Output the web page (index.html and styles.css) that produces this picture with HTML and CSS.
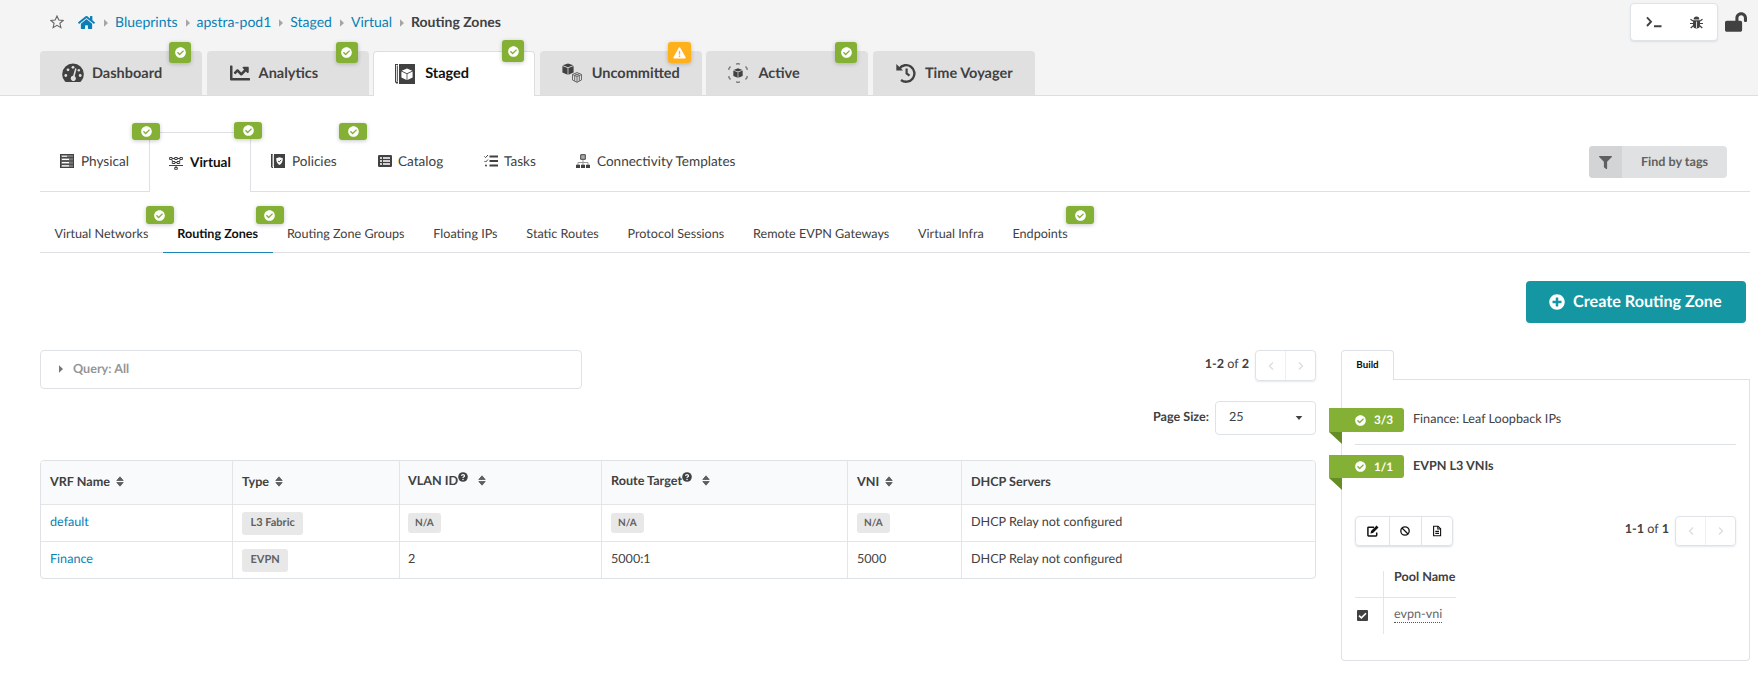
FILE: index.html
```html
<!DOCTYPE html>
<html lang="en">
<head>
<meta charset="utf-8">
<title>Routing Zones</title>
<link rel="stylesheet" href="styles.css">
</head>
<body>
<svg class="defs" aria-hidden="true">
  <symbol id="check" viewBox="0 0 512 512"><path d="M504 256c0 136.967-111.033 248-248 248S8 392.967 8 256 119.033 8 256 8s248 111.033 248 248zM227.314 387.314l184-184c6.248-6.248 6.248-16.379 0-22.627l-22.627-22.627c-6.248-6.249-16.379-6.249-22.628 0L216 308.118l-70.059-70.059c-6.248-6.248-16.379-6.248-22.628 0l-22.627 22.627c-6.248 6.248-6.248 16.379 0 22.627l104 104c6.249 6.249 16.379 6.249 22.628.001z"/></symbol>
  <symbol id="caret" viewBox="0 0 4 8"><path d="M0 0.300L4 4L0 7.700z"/></symbol>
  <symbol id="sort" viewBox="0 0 8 11"><path d="M.8 4.500L4 .8L7.200 4.500zM.8 6.500H7.200L4 10.200z" stroke="currentColor" stroke-width=".9" stroke-linejoin="round"/></symbol>
  <symbol id="help" viewBox="0 0 10 10"><circle cx="5" cy="5" r="4.800"/><path d="M3.500 3.900C3.600 2.200 6.500 2.200 6.500 3.900C6.500 4.900 5 4.800 5 6" fill="none" stroke="#f9fafc" stroke-width="1.200"/><circle cx="5" cy="7.500" r=".75" fill="#f9fafc"/></symbol>
  <symbol id="prev" viewBox="0 0 6 10"><path d="M5 1.500L1.500 5L5 8.500" fill="none" stroke="currentColor" stroke-width="1.300"/></symbol>
  <symbol id="next" viewBox="0 0 6 10"><path d="M1 1.500L4.500 5L1 8.500" fill="none" stroke="currentColor" stroke-width="1.300"/></symbol>
  <symbol id="cube" viewBox="0 0 12 12"><path d="M6 .4L11.300 2.300L6 4.300L.7 2.300zM.4 3L5.600 5V11.800L.4 9.600zM11.600 3L6.400 5V11.800L11.600 9.600z"/></symbol>
</svg>

<header class="top">
  <div class="crumb-row">
    <nav class="crumbs">
      <svg class="star" viewBox="0 0 14 14"><path d="M7 1L8.800 5L13.200 5.400L9.900 8.300L10.900 12.700L7 10.400L3.100 12.700L4.100 8.300L.8 5.400L5.200 5z"/></svg>
      <svg class="home" viewBox="0 0 576 512"><path d="M280.370 148.260L96 300.110V464a16 16 0 0 0 16 16l112.060-.29a16 16 0 0 0 15.920-16V368a16 16 0 0 1 16-16h64a16 16 0 0 1 16 16v95.640a16 16 0 0 0 16 16.050L464 480a16 16 0 0 0 16-16V300L295.670 148.260a12.190 12.190 0 0 0-15.300 0zM571.600 251.470L488 182.560V44.050a12 12 0 0 0-12-12h-56a12 12 0 0 0-12 12v72.610L318.470 43a48 48 0 0 0-61 0L4.340 251.470a12 12 0 0 0-1.600 16.900l25.500 31A12 12 0 0 0 45.150 301l235.220-193.740a12.190 12.190 0 0 1 15.300 0L530.900 301a12 12 0 0 0 16.900-1.600l25.500-31a12 12 0 0 0-1.700-16.930z"/></svg>
      <svg class="sep"><use href="#caret"/></svg>
      <a>Blueprints</a><svg class="sep"><use href="#caret"/></svg>
      <a>apstra-pod1</a><svg class="sep"><use href="#caret"/></svg>
      <a>Staged</a><svg class="sep"><use href="#caret"/></svg>
      <a>Virtual</a><svg class="sep"><use href="#caret"/></svg>
      <b>Routing Zones</b>
    </nav>
    <div class="tools">
      <div class="tool-box">
        <svg class="term" viewBox="0 0 16 12"><path d="M1 1.300L5 5.700L1 10M8 10.200H15.500" fill="none" stroke="#414141" stroke-width="1.900"/></svg>
        <svg class="bug" viewBox="0 0 13 13"><path d="M3.700 3.400a2.800 2.800 0 0 1 5.600 0zM3 4.200H10V9.500a3.500 3 0 0 1-7 0z"/><path d="M.5 3.200L3 5M12.500 3.200L10 5M0 7.500H3M10 7.500H13M.7 12L3.300 9.700M12.300 12L9.700 9.700" fill="none" stroke="#414141" stroke-width="1.200"/><path d="M6.500 5.500V12" stroke="#fff" stroke-width=".8"/></svg>
      </div>
      <svg class="lock" viewBox="0 0 576 512"><path d="M423.500 0C339.500.3 272 69.500 272 153.500V224H48c-26.500 0-48 21.500-48 48v192c0 26.500 21.500 48 48 48h352c26.500 0 48-21.500 48-48V272c0-26.500-21.500-48-48-48h-48v-71.100c0-39.600 31.700-72.500 71.300-72.900 40-.4 72.700 32.100 72.700 72v80c0 13.300 10.700 24 24 24h32c13.300 0 24-10.700 24-24v-80C576 68 507.500-.3 423.500 0z"/></svg>
    </div>
  </div>
  <nav class="main-tabs">
    <div class="mtab">
      <svg viewBox="0 0 22 20"><path d="M3 18.600A10.800 10.800 0 1 1 19 18.600Q18.600 19 18 19H4Q3.400 19 3 18.600z"/><g fill="#e0e0e0"><circle cx="3.800" cy="12.500" r="1.400"/><circle cx="6" cy="6.800" r="1.400"/><circle cx="11" cy="4.300" r="1.400"/><circle cx="18.200" cy="12.500" r="1.400"/><circle cx="16.800" cy="7.300" r="1.200"/><path d="M13.200 5.200L14.600 5.700L12.700 13.200A2.600 2.600 0 1 1 11.100 12.800z"/></g></svg>
      <span>Dashboard</span><i class="badge"><svg><use href="#check"/></svg></i>
    </div>
    <div class="mtab">
      <svg viewBox="0 0 512 512"><path d="M496 384H64V80c0-8.840-7.160-16-16-16H16C7.160 64 0 71.160 0 80v336c0 17.670 14.330 32 32 32h464c8.840 0 16-7.160 16-16v-32c0-8.840-7.160-16-16-16zM464 96H345.940c-21.380 0-32.090 25.850-16.970 40.970l32.400 32.400L288 242.750l-73.370-73.370c-12.500-12.500-32.760-12.500-45.250 0l-68.690 68.690c-6.250 6.250-6.250 16.380 0 22.630l22.620 22.620c6.250 6.250 16.380 6.250 22.630 0L192 237.250l73.370 73.370c12.500 12.500 32.760 12.500 45.250 0l96-96 32.400 32.400c15.120 15.120 40.970 4.410 40.970-16.970V112c.010-8.840-7.150-16-15.990-16z"/></svg>
      <span>Analytics</span><i class="badge"><svg><use href="#check"/></svg></i>
    </div>
    <div class="mtab active">
      <svg viewBox="0 0 20 20"><path d="M4 0H20V20H4zM0 0H3V.9H1V17.500H3V19.500H1.200L0 18z"/><path d="M2.300 1.500V17" stroke="#414141"/><g fill="#fff" transform="translate(6 4)"><path d="M6 .4L11.300 2.800L6 5.300L.7 2.800zM.4 3.600L5.600 6V12L.4 9.600zM11.600 3.600L6.400 6V12L11.600 9.600z"/></g></svg>
      <span>Staged</span><i class="badge"><svg><use href="#check"/></svg></i>
    </div>
    <div class="mtab">
      <svg viewBox="0 0 22 20"><use href="#cube" x="0" y="0" width="12" height="12"/><g fill="none" stroke="#6a6a6a" stroke-width="1"><path d="M10.500 11.500L15 9.500L19.500 11.500V17L15 19.300L10.500 17V11.500L15 13.500L19.500 11.500M15 13.500V19.300"/><path d="M12.500 10.500L17.300 12.500V18M17.500 10.500L12.700 12.500V18"/></g></svg>
      <span>Uncommitted</span><i class="badge warn"><svg viewBox="0 0 14 13"><path d="M6.200.8Q7 -.2 7.800.8L13.600 11Q14 12.300 12.800 12.500H1.200Q0 12.300.4 11z"/><path d="M7 4V8M7 9.200V10.700" stroke="#ffb11b" stroke-width="1.500"/></svg></i>
    </div>
    <div class="mtab">
      <svg viewBox="0 0 22 20"><use href="#cube" x="5" y="5" width="10" height="10"/><path d="M2.500 3.500L.9 5.500V7M17.500 3.500L19.100 5.500V7M2.500 16.500L.9 14.500V13M17.500 16.500L19.100 14.500V13M8 1.200L10 .6L12 1.200M8 18.800L10 19.400L12 18.800" fill="none" stroke="#777" stroke-width="1.300"/></svg>
      <span>Active</span><i class="badge"><svg><use href="#check"/></svg></i>
    </div>
    <div class="mtab">
      <svg viewBox="0 0 20 20"><path d="M3.300 5.700A8.300 8.300 0 1 1 5 17" fill="none" stroke="#414141" stroke-width="2.400"/><path d="M.3 1V7.600H7z"/><path d="M10.600 5.500V10.400L13.500 12.600" fill="none" stroke="#414141" stroke-width="2.200"/></svg>
      <span>Time Voyager</span>
    </div>
  </nav>
</header>

<main>
  <nav class="sub-tabs">
    <div class="stab w109"><svg viewBox="0 0 14 14"><path d="M0 0H14V14H0z" fill="#777"/><path d="M0 .5H14M0 3.700H14M0 7H14M0 10.300H14M0 13.500H14M.5 0V14M13.500 0V14" stroke="#414141"/><path d="M2 2.200H7M2 5.400H9M2 8.600H9M2 11.900H9" stroke="#fff" stroke-width="1.100"/></svg><span>Physical</span><i class="badge wide"><svg><use href="#check"/></svg></i></div>
    <div class="stab active"><svg viewBox="0 0 14 14"><path d="M.6 1.500H3.100V3.500H.6zM5.700 1.500H8.300V3.500H5.700zM10.900 1.500H13.400V3.500H10.900zM3.300 5.500H6V7.500H3.300zM8 5.500H10.700V7.500H8zM5.700 11.500H8.300V13.300H5.700zM0 9.500H14M3.100 2.500H5.700M8.300 2.500H10.900M7 9.500V11.500M2.300 3.500L4 5.500M11.700 3.500L10 5.500M6 6.500H8" fill="none" stroke="#414141" stroke-width="1"/></svg><span>Virtual</span><i class="badge wide"><svg><use href="#check"/></svg></i></div>
    <div class="stab w107"><svg viewBox="0 0 14 14"><path d="M3 0H14V14H3zM0 0H2V.8H1V12.500H2V14H1L0 13z"/><path d="M1.700 1V12" stroke="#414141" stroke-width=".7"/><path d="M8.500 3.200L11.800 4.300C11.800 8 10.500 9.800 8.500 10.900C6.500 9.800 5.200 8 5.200 4.300z" fill="#fff"/><path d="M7 6.900L8.200 8L10.200 5.800" stroke="#414141" fill="none" stroke-width=".9"/></svg><span>Policies</span><i class="badge wide"><svg><use href="#check"/></svg></i></div>
    <div class="stab w106 tight"><svg viewBox="0 0 14 14"><rect y="1" width="14" height="12" rx="1.200"/><path d="M2 4H4M5 4H12M2 7H4M5 7H12M2 10H4M5 10H12" stroke="#fff" stroke-width="1.600"/></svg><span>Catalog</span></div>
    <div class="stab w92 tight"><svg viewBox="0 0 14 14"><path d="M5.500 2.500H14M5.500 7H14M5.500 11.500H14" stroke="#414141" stroke-width="1.800"/><path d="M.4 2.400L1.600 3.600L4 1M.4 6.900L1.600 8.100L4 5.500" fill="none" stroke="#414141"/><circle cx="2" cy="11.500" r="1"/></svg><span>Tasks</span></div>
    <div class="stab"><svg viewBox="0 0 14 14"><path d="M4.700.7H9.300V5.300H4.700z" fill="#aaa" stroke="#414141"/><path d="M7 6V8.500M2 11V8.500H12V11M7 8.500V11" stroke="#999" fill="none"/><path d="M0 10.700H4V14H0zM5 10.700H9V14H5zM10 10.700H14V14H10z"/></svg><span>Connectivity Templates</span></div>
    <div class="tagfind"><div><svg viewBox="0 0 512 512"><path d="M487.976 0H24.028C2.710 0-8.047 25.866 7.058 40.971L192 225.941V432c0 7.831 3.821 15.170 10.237 19.662l80 55.980C298.020 518.690 320 507.493 320 487.980V225.941l184.947-184.970C520.021 25.896 509.338 0 487.976 0z"/></svg></div><span>Find by tags</span></div>
  </nav>

  <nav class="page-tabs">
    <div>Virtual Networks<i class="badge wide"><svg><use href="#check"/></svg></i></div>
    <div class="active">Routing Zones<i class="badge wide"><svg><use href="#check"/></svg></i></div>
    <div>Routing Zone Groups</div>
    <div>Floating IPs</div>
    <div>Static Routes</div>
    <div>Protocol Sessions</div>
    <div>Remote EVPN Gateways</div>
    <div>Virtual Infra</div>
    <div>Endpoints<i class="badge wide"><svg><use href="#check"/></svg></i></div>
  </nav>

  <div class="actions"><button class="create"><svg viewBox="0 0 512 512"><path d="M256 8C119 8 8 119 8 256s111 248 248 248 248-111 248-248S393 8 256 8zm144 276c0 6.600-5.400 12-12 12h-92v92c0 6.600-5.400 12-12 12h-56c-6.600 0-12-5.400-12-12v-92h-92c-6.600 0-12-5.400-12-12v-56c0-6.600 5.400-12 12-12h92v-92c0-6.600 5.400-12 12-12h56c6.600 0 12 5.400 12 12v92h92c6.600 0 12 5.400 12 12v56z"/></svg><span>Create Routing Zone</span></button></div>

  <div class="content">
    <section class="list">
      <div class="list-head">
        <div class="query"><svg><use href="#caret"/></svg><span>Query: All</span></div>
        <div class="paging">
          <div class="pager"><span><b>1-2</b> of <b>2</b></span><div class="pbox"><i><svg><use href="#prev"/></svg></i><i><svg><use href="#next"/></svg></i></div></div>
          <div class="size"><b>Page Size:</b><div class="select"><span>25</span><svg viewBox="0 0 8 4"><path d="M.7 0H7.300L4 4z"/></svg></div></div>
        </div>
      </div>
      <div class="table">
        <div class="tr th">
          <div>VRF Name<svg class="sort"><use href="#sort"/></svg></div>
          <div>Type<svg class="sort"><use href="#sort"/></svg></div>
          <div class="hashelp">VLAN ID<svg class="help"><use href="#help"/></svg><svg class="sort"><use href="#sort"/></svg></div>
          <div class="hashelp">Route Target<svg class="help"><use href="#help"/></svg><svg class="sort"><use href="#sort"/></svg></div>
          <div>VNI<svg class="sort"><use href="#sort"/></svg></div>
          <div>DHCP Servers</div>
        </div>
        <div class="tr">
          <div><a>default</a></div><div><span class="label">L3 Fabric</span></div><div><span class="label small">N/A</span></div><div><span class="label small">N/A</span></div><div><span class="label small">N/A</span></div><div>DHCP Relay not configured</div>
        </div>
        <div class="tr">
          <div><a>Finance</a></div><div><span class="label">EVPN</span></div><div>2</div><div>5000:1</div><div>5000</div><div>DHCP Relay not configured</div>
        </div>
      </div>
    </section>

    <aside class="build">
      <div class="build-tabs"><div class="build-tab">Build</div><div class="build-rule"></div></div>
      <div class="build-body">
        <div class="res first"><div class="ribbon"><svg><use href="#check"/></svg><b>3/3</b></div><span>Finance: Leaf Loopback IPs</span></div>
        <div class="res second"><div class="ribbon"><svg><use href="#check"/></svg><b>1/1</b></div><b>EVPN L3 VNIs</b></div>
        <div class="res-tools">
          <div class="bar">
            <i><svg viewBox="0 0 12 12"><path d="M7 2.200H1.600Q.9 2.200.9 2.900V10.300Q.9 11 1.600 11H9Q9.700 11 9.700 10.300V7.500" fill="none" stroke="#111" stroke-width="1.500"/><path d="M9.600.6L11.500 2.500L6 8L3.500 8.600L4 6.100z"/></svg></i>
            <i><svg viewBox="0 0 12 12"><circle cx="6" cy="6" r="4.200" fill="none" stroke="#111" stroke-width="1.300"/><path d="M3 3L9 9" stroke="#111" stroke-width="1.300"/></svg></i>
            <i><svg viewBox="0 0 12 12"><path d="M2.600 1.200H7L9.600 3.800V10.800H2.600z" fill="none" stroke="#111" stroke-width="1.100"/><path d="M6.800 1V4H9.800M4.300 6.400H8M4.300 8.400H8" fill="none" stroke="#111" stroke-width="1.100"/></svg></i>
          </div>
          <div class="pager"><span><b>1-1</b> of <b>1</b></span><div class="pbox"><i><svg><use href="#prev"/></svg></i><i><svg><use href="#next"/></svg></i></div></div>
        </div>
        <div class="pool">
          <div class="c h"></div><div class="n h">Pool Name</div>
          <div class="c"><svg viewBox="0 0 11 11"><rect width="11" height="11" rx="1"/><path d="M2 5.600L4.400 7.900L9 3.300" fill="none" stroke="#fff" stroke-width="1.600"/></svg></div><div class="n"><span>evpn-vni</span></div>
        </div>
      </div>
    </aside>
  </div>
</main>
</body>
</html>
```

FILE: styles.css
```css
* { box-sizing: border-box; }
body { margin: 0; background: #fff; color: #414141; font: 12.6px/18px Lato, Carlito, "Liberation Sans", sans-serif; text-rendering: geometricPrecision; }
svg { display: block; flex: none; fill: currentColor; }
i { font-style: normal; }
.defs { position: absolute; width: 0; height: 0; }
a { color: #0a7fb5; }

.top { height: 96px; background: #f4f4f4; border-bottom: 1px solid #dededf; }
.crumb-row { display: flex; justify-content: space-between; height: 51px; }
.crumbs { display: flex; align-items: center; height: 44px; padding-left: 50px; font-size: 14px; }
.star { width: 14px; height: 14px; margin-right: 14px; fill: none; stroke: #666; stroke-width: 1.1; }
.home { width: 17px; height: 15px; color: #0a7fb5; }
.sep { width: 4px; height: 8px; margin: 1px 7px 0 8px; color: #a6a6a6; }
.home + .sep { margin: 1px 7px 0 9px; }
.tools { display: flex; align-items: flex-start; padding: 3px 11px 0 0; }
.tool-box { display: flex; align-items: center; width: 88px; height: 38px; padding: 0 14px 0 15px; justify-content: space-between; background: #fff; border: 1px solid #dfe3ea; border-radius: 4px; box-shadow: 0 1px 2px #d9dfe7; }
.term { width: 16px; height: 12px; }
.bug { width: 13px; height: 13px; }
.lock { width: 22px; height: 20px; margin: 9px 0 0 7px; }

.main-tabs { display: flex; gap: 4.6px; padding-left: 40px; }
.mtab { position: relative; display: flex; align-items: center; width: 162px; height: 44px; padding: 0 0 0 22px; background: #e0e0e0; border-radius: 4px 4px 0 0; font-size: 14.5px; font-weight: 700; }
.mtab > svg { width: 22px; height: 20px; margin-right: 8px; }
.mtab > span { margin-top: 1px; }
.mtab.active { height: 45px; padding-left: 20px; color: #111; background: #fff; border: 1px solid #dededf; border-bottom: 0; }
.mtab.active > svg { color: #414141; margin-right: 9px; }
.mtab.active > span { margin-top: 0; }
.badge { position: absolute; z-index: 1; right: 11px; top: -9px; display: flex; align-items: center; justify-content: center; width: 22px; height: 21px; color: #fff; background: #84b135; border-radius: 3px; box-shadow: 0 1px 4px rgba(0,0,0,.22); }
.badge svg { width: 11px; height: 11px; }
.badge.warn { background: #ffb11b; width: 23px; }
.badge.warn svg { width: 13px; height: 12px; }
.mtab.active .badge { top: -12px; height: 22px; right: 10px; }

.sub-tabs { display: flex; height: 60px; margin: 36px 8px 0 40px; border-bottom: 1px solid #dfe0e4; }
.stab { position: relative; display: flex; align-items: center; height: 60px; padding: 0 0 2px 20px; font-size: 13.55px; }
.stab > svg { width: 14px; height: 14px; margin-right: 7px; }
.stab > span { margin-bottom: 1px; white-space: nowrap; }
.stab.tight > svg { margin-right: 6px; }
.stab.active { width: 102px; padding: 0 0 0 19px; color: #111; font-weight: 700; background: #fff; border: 1px solid #dfe0e4; border-bottom: 0; }
.w109 { width: 109px; }
.w107 { width: 107px; }
.w106 { width: 106px; }
.w92 { width: 92px; }
.badge.wide { width: 28px; height: 17px; right: -11px; top: -9px; }
.stab.active .wide { right: -12px; top: -11px; }
.w107 .wide { right: -9px; }
.tagfind { display: flex; width: 138px; height: 32px; margin: 14px 23px 0 auto; background: #e0e1e2; border-radius: 4px; overflow: hidden; color: #606060; font-size: 12.6px; font-weight: 700; }
.tagfind div { display: flex; align-items: center; justify-content: center; width: 33px; background: #d3d4d5; }
.tagfind div svg { width: 13px; height: 13px; }
.tagfind span { flex: 1; text-align: center; line-height: 31px; }

.page-tabs { display: flex; height: 61px; margin: 0 8px 0 40px; border-bottom: 1px solid #dfe0e4; }
.page-tabs div { position: relative; height: 61px; padding: 33px 14.4px 0; white-space: nowrap; }
.page-tabs .active { color: #111; font-weight: 700; border-bottom: 1px solid #1a86ba; }
.page-tabs .wide { top: 14px; height: 18px; }
.page-tabs div:last-child .wide { right: -12px; }

.actions { display: flex; justify-content: flex-end; padding: 28px 12px 0 0; }
.create { display: flex; align-items: center; width: 220px; height: 42px; padding: 0 0 0 23px; gap: 8px; border: 0; border-radius: 4px; color: #fff; background: #1496a3; font: 700 16.2px/20px Lato, Carlito, sans-serif; white-space: nowrap; text-rendering: geometricPrecision; }
.create svg { width: 16px; height: 16px; }
.create span { margin-bottom: 1px; }

.content { display: flex; gap: 25px; padding: 27px 8px 0 40px; }
.list { width: 1276px; }
.list-head { display: flex; justify-content: space-between; height: 110px; }
.query { display: flex; align-items: center; width: 542px; height: 39px; padding: 0 0 2px 18px; gap: 10px; border: 1px solid #dee2e6; border-radius: 4px; color: #959595; font-weight: 700; }
.query svg { width: 4px; height: 8px; color: #777; }
.paging { display: flex; flex-direction: column; align-items: flex-end; gap: 20px; }
.pager { display: flex; align-items: center; gap: 6px; }
.pager > span { margin-bottom: 3px; }
.pbox { display: flex; width: 61px; height: 31px; border: 1px solid #dfe3e8; border-radius: 4px; box-shadow: 0 1px 2px #e3e7ec; }
.pbox i { flex: 1; display: flex; align-items: center; justify-content: center; color: #ddd; }
.pbox i + i { border-left: 1px solid #eff0f2; }
.pbox svg { width: 6px; height: 10px; }
.size { display: flex; align-items: center; gap: 6px; }
.size b { margin-bottom: 3px; }
.select { display: flex; align-items: center; justify-content: space-between; width: 101px; height: 34px; padding: 0 12px 2px 13px; border: 1px solid #dee2e6; border-radius: 4px; }
.select svg { width: 8px; height: 4px; margin-top: 2px; }
.table { border: 1px solid #dee1e5; border-radius: 4px; overflow: hidden; }
.tr { display: grid; grid-template-columns: 191px 167px 202px 246px 114px 1fr; height: 37px; border-top: 1px solid #e4e5e7; }
.tr > div { display: flex; align-items: center; padding: 0 0 3px 9px; }
.tr > div + div { border-left: 1px solid #e4e5e7; }
.tr > div:nth-child(3) { padding-left: 8px; }
.th { height: 43px; background: #f9fafc; border-top: 0; font-weight: 700; }
.th > div { padding-bottom: 2px; }
.sort { width: 8px; height: 11px; margin: 0 0 1px 6px; color: #606060; }
.help { width: 10px; height: 10px; margin: 0 4px 9px 0; }
.tr .hashelp { padding-bottom: 3px; }
.label { height: 23px; margin-top: 4px; padding: 0 8.5px; background: #e8e8e8; border-radius: 3px; color: #606060; font-size: 11px; font-weight: 700; line-height: 22px; }
.label.small { height: 20px; margin-top: 3px; padding: 0 7px; font-size: 10px; line-height: 20px; }

.build { flex: 1; height: 311px; display: flex; flex-direction: column; }
.build-tabs { display: flex; height: 30px; }
.build-tab { width: 53px; border: 1px solid #dee1e5; border-bottom: 0; border-radius: 4px 4px 0 0; text-align: center; font-size: 9.8px; line-height: 29px; font-weight: 700; color: #111; }
.build-rule { flex: 1; border-bottom: 1px solid #dee1e5; }
.build-body { flex: 1; border: 1px solid #dee1e5; border-top: 0; border-radius: 0 0 4px 4px; padding: 28px 13px 0; }
.res { display: flex; gap: 9px; line-height: 21px; }
.first { height: 37px; border-bottom: 1px solid #dee1e5; }
.second { height: 23px; margin-top: 10px; }
.ribbon { position: relative; display: flex; align-items: center; gap: 8px; width: 75px; height: 24px; margin-left: -26px; padding-left: 26px; color: #fff; background: #84b135; border-radius: 0 3px 3px 0; font-size: 11.8px; }
.ribbon b { margin-bottom: 1px; }
.ribbon svg { width: 11px; height: 11px; }
.ribbon::after { content: ""; position: absolute; left: 0; top: 24px; border-style: solid; border-width: 0 13px 12px 0; border-color: transparent #658d26 transparent transparent; }
.second .ribbon { height: 23px; }
.second .ribbon::after { top: 23px; }
.res-tools { display: flex; align-items: flex-start; justify-content: space-between; margin-top: 38px; height: 31px; }
.bar { display: flex; width: 98px; height: 30px; border: 1px solid #dfe3e8; border-radius: 4px; box-shadow: 0 1px 2px #d8dee6; color: #111; }
.bar i { width: 34px; display: flex; align-items: center; justify-content: center; }
.bar i + i { width: 32px; border-left: 1px solid #dfe3e8; }
.bar svg { width: 12px; height: 12px; }
.res-tools .pbox { height: 30px; }
.res-tools .pager > span { margin-bottom: 4px; }
.pool { display: grid; grid-template-columns: 29px 72px; grid-template-rows: 27px 36px; width: 101px; margin-top: 24px; }
.pool .c { border-right: 1px solid #e4e5e7; padding: 12px 0 0 2px; }
.pool .c svg { width: 11px; height: 11px; }
.pool .n { padding: 7px 0 0 10px; color: #666; white-space: nowrap; }
.pool .n span { border-bottom: 1px dotted #555; padding-bottom: 1px; }
.pool .h { border-bottom: 1px solid #e4e5e7; font-weight: 700; color: #414141; }
.pool .n.h { padding-top: 0; line-height: 12px; }
```
